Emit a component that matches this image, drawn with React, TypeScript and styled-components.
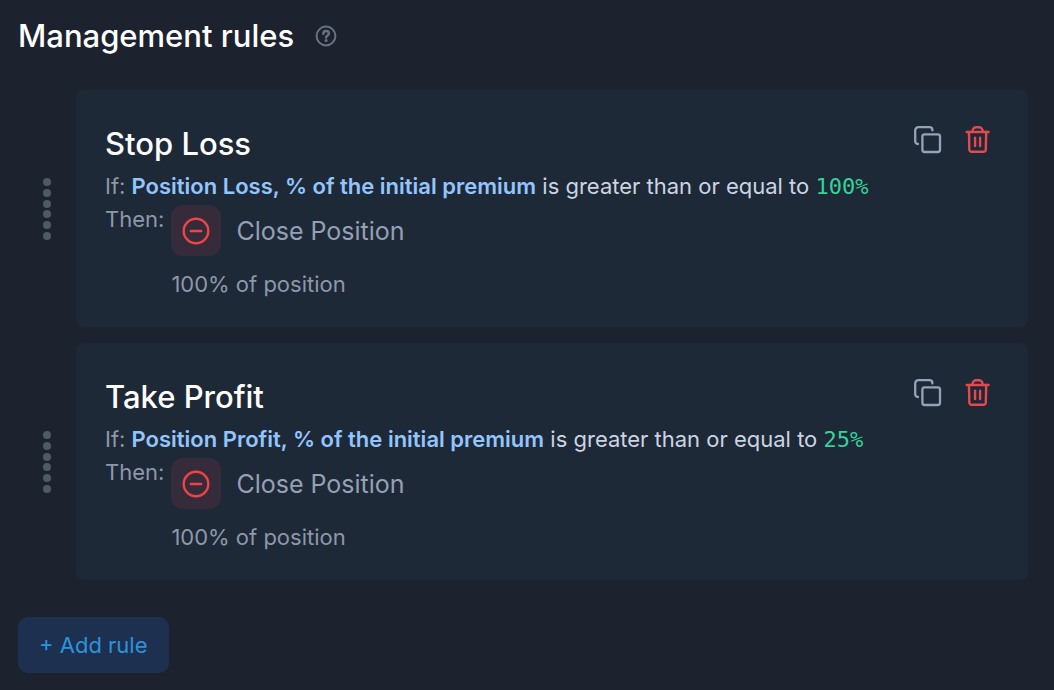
import React from "react";
import styled, { createGlobalStyle } from "styled-components";

const GlobalStyle = createGlobalStyle`
  * { box-sizing: border-box; }
  body {
    margin: 0;
    background: #1c232f;
    color: #ffffff;
    font-family: Inter, "Liberation Sans", sans-serif;
    font-size: 22px;
    line-height: 32px;
  }
  h1, h2, p, ul { margin: 0; padding: 0; }
`;

const Page = styled.main`
  padding: 16px 26px 16px 18px;
`;

const Header = styled.header`
  display: flex;
  align-items: center;
  gap: 20px;
  margin-bottom: 34px;
`;

const Title = styled.h1`
  font-size: 31px;
  line-height: 40px;
  font-weight: 500;
`;

const IconButton = styled.button<{ $color: string }>`
  display: flex;
  padding: 0;
  border: 0;
  background: none;
  color: ${(p) => p.$color};
  cursor: pointer;
`;

const RuleList = styled.ul`
  display: flex;
  flex-direction: column;
  gap: 16px;
  list-style: none;
`;

const RuleRow = styled.li`
  display: flex;
  align-items: center;
`;

const DragHandle = styled.div`
  display: flex;
  flex: none;
  justify-content: center;
  width: 58px;
  color: #505966;
  cursor: grab;
`;

const Card = styled.article`
  display: flex;
  flex: 1;
  align-items: flex-start;
  justify-content: space-between;
  padding: 36px 36px 27px 29px;
  border-radius: 8px;
  background: #1e2938;
`;

const RuleName = styled.h2`
  font-size: 31px;
  line-height: 36px;
  font-weight: 500;
  margin-bottom: 8px;
`;

const Condition = styled.p`
  color: #cbd5e1;
`;

const Muted = styled.span`
  color: #8d98a9;
`;

const Metric = styled.strong`
  color: #93c5fd;
  font-weight: 600;
`;

const Value = styled.span`
  color: #34d399;
  font-family: "DejaVu Sans Mono", monospace;
`;

const Outcome = styled.div`
  display: flex;
  gap: 7px;
`;

const Action = styled.div`
  display: flex;
  align-items: center;
  gap: 15px;
  margin: 2px 0 12px;
  color: #94a0b3;
  font-size: 25px;
`;

const ActionIcon = styled.span`
  display: flex;
  align-items: center;
  justify-content: center;
  width: 50px;
  height: 51px;
  border-radius: 12px;
  background: #362b3a;
  color: #ef4444;
`;

const Tools = styled.div`
  display: flex;
  gap: 22px;
`;

const AddButton = styled.button`
  margin-top: 37px;
  padding: 12px 21px;
  border: 0;
  border-radius: 10px;
  background: #1e3050;
  color: #2b93dc;
  font: inherit;
  cursor: pointer;
`;

const HelpIcon = () => (
  <svg width="24" height="24" viewBox="0 0 24 24" fill="none" stroke="currentColor" strokeWidth="2" strokeLinecap="round">
    <circle cx="12" cy="12" r="9.4" />
    <path d="M9.3 9.7C9.3 8 10.5 7 12.1 7s2.8 1 2.8 2.5c0 1.9-2.8 2-2.8 4" strokeWidth="2.4" />
    <circle cx="12.1" cy="16.6" r="1.5" fill="currentColor" stroke="none" />
  </svg>
);

const CopyIcon = () => (
  <svg width="28" height="28" viewBox="0 0 28 28" fill="none" stroke="currentColor" strokeWidth="2.3" strokeLinecap="round">
    <rect x="8.4" y="8.4" width="17.6" height="17.6" rx="2.2" />
    <path d="M18.4 4.4A3 3 0 0 0 15.8 1.2H4.4A3.2 3.2 0 0 0 1.2 4.4v10.8A3 3 0 0 0 4 18" />
  </svg>
);

const TrashIcon = () => (
  <svg width="28" height="28" viewBox="0 0 28 28" fill="none" stroke="currentColor" strokeWidth="2.4" strokeLinecap="round" strokeLinejoin="round">
    <path d="M2.7 6h21.8M8.6 6V4.8A3.6 3.6 0 0 1 12.2 1.3H15a3.6 3.6 0 0 1 3.6 3.5V6" />
    <path d="M5 6l.3 17.4A2.4 2.4 0 0 0 7.7 25.8h11.7a2.4 2.4 0 0 0 2.4-2.4L22.2 6M11.1 11.8v8.2M16.1 11.8v8.2" />
  </svg>
);

const MinusIcon = () => (
  <svg width="28" height="28" viewBox="0 0 28 28" fill="none" stroke="currentColor" strokeWidth="2.4" strokeLinecap="round">
    <circle cx="14" cy="14" r="12.3" />
    <path d="M8.8 14h10.4" />
  </svg>
);

const GripIcon = () => (
  <svg width="10" height="64" viewBox="0 0 10 64" fill="currentColor">
    {[5, 16, 27, 37, 48, 59].map((y) => (
      <circle key={y} cx="5" cy={y} r="4" />
    ))}
  </svg>
);

interface Rule {
  name: string;
  metric: string;
  value: string;
}

const rules: Rule[] = [
  { name: "Stop Loss", metric: "Position Loss, % of the initial premium", value: "100%" },
  { name: "Take Profit", metric: "Position Profit, % of the initial premium", value: "25%" },
];

const RuleItem = ({ name, metric, value }: Rule) => (
  <RuleRow>
    <DragHandle>
      <GripIcon />
    </DragHandle>
    <Card>
      <div>
        <RuleName>{name}</RuleName>
        <Condition>
          <Muted>If:</Muted> <Metric>{metric}</Metric> is greater than or equal to <Value>{value}</Value>
        </Condition>
        <Outcome>
          <Muted>Then:</Muted>
          <div>
            <Action>
              <ActionIcon>
                <MinusIcon />
              </ActionIcon>
              Close Position
            </Action>
            <Muted>100% of position</Muted>
          </div>
        </Outcome>
      </div>
      <Tools>
        <IconButton type="button" aria-label="Duplicate rule" $color="#94a3b8">
          <CopyIcon />
        </IconButton>
        <IconButton type="button" aria-label="Delete rule" $color="#e5484d">
          <TrashIcon />
        </IconButton>
      </Tools>
    </Card>
  </RuleRow>
);

export default function App() {
  return (
    <>
      <GlobalStyle />
      <Page>
        <Header>
          <Title>Management rules</Title>
          <IconButton type="button" aria-label="Help" $color="#6b7280">
            <HelpIcon />
          </IconButton>
        </Header>
        <RuleList>
          {rules.map((rule) => (
            <RuleItem key={rule.name} {...rule} />
          ))}
        </RuleList>
        <AddButton type="button">+ Add rule</AddButton>
      </Page>
    </>
  );
}
